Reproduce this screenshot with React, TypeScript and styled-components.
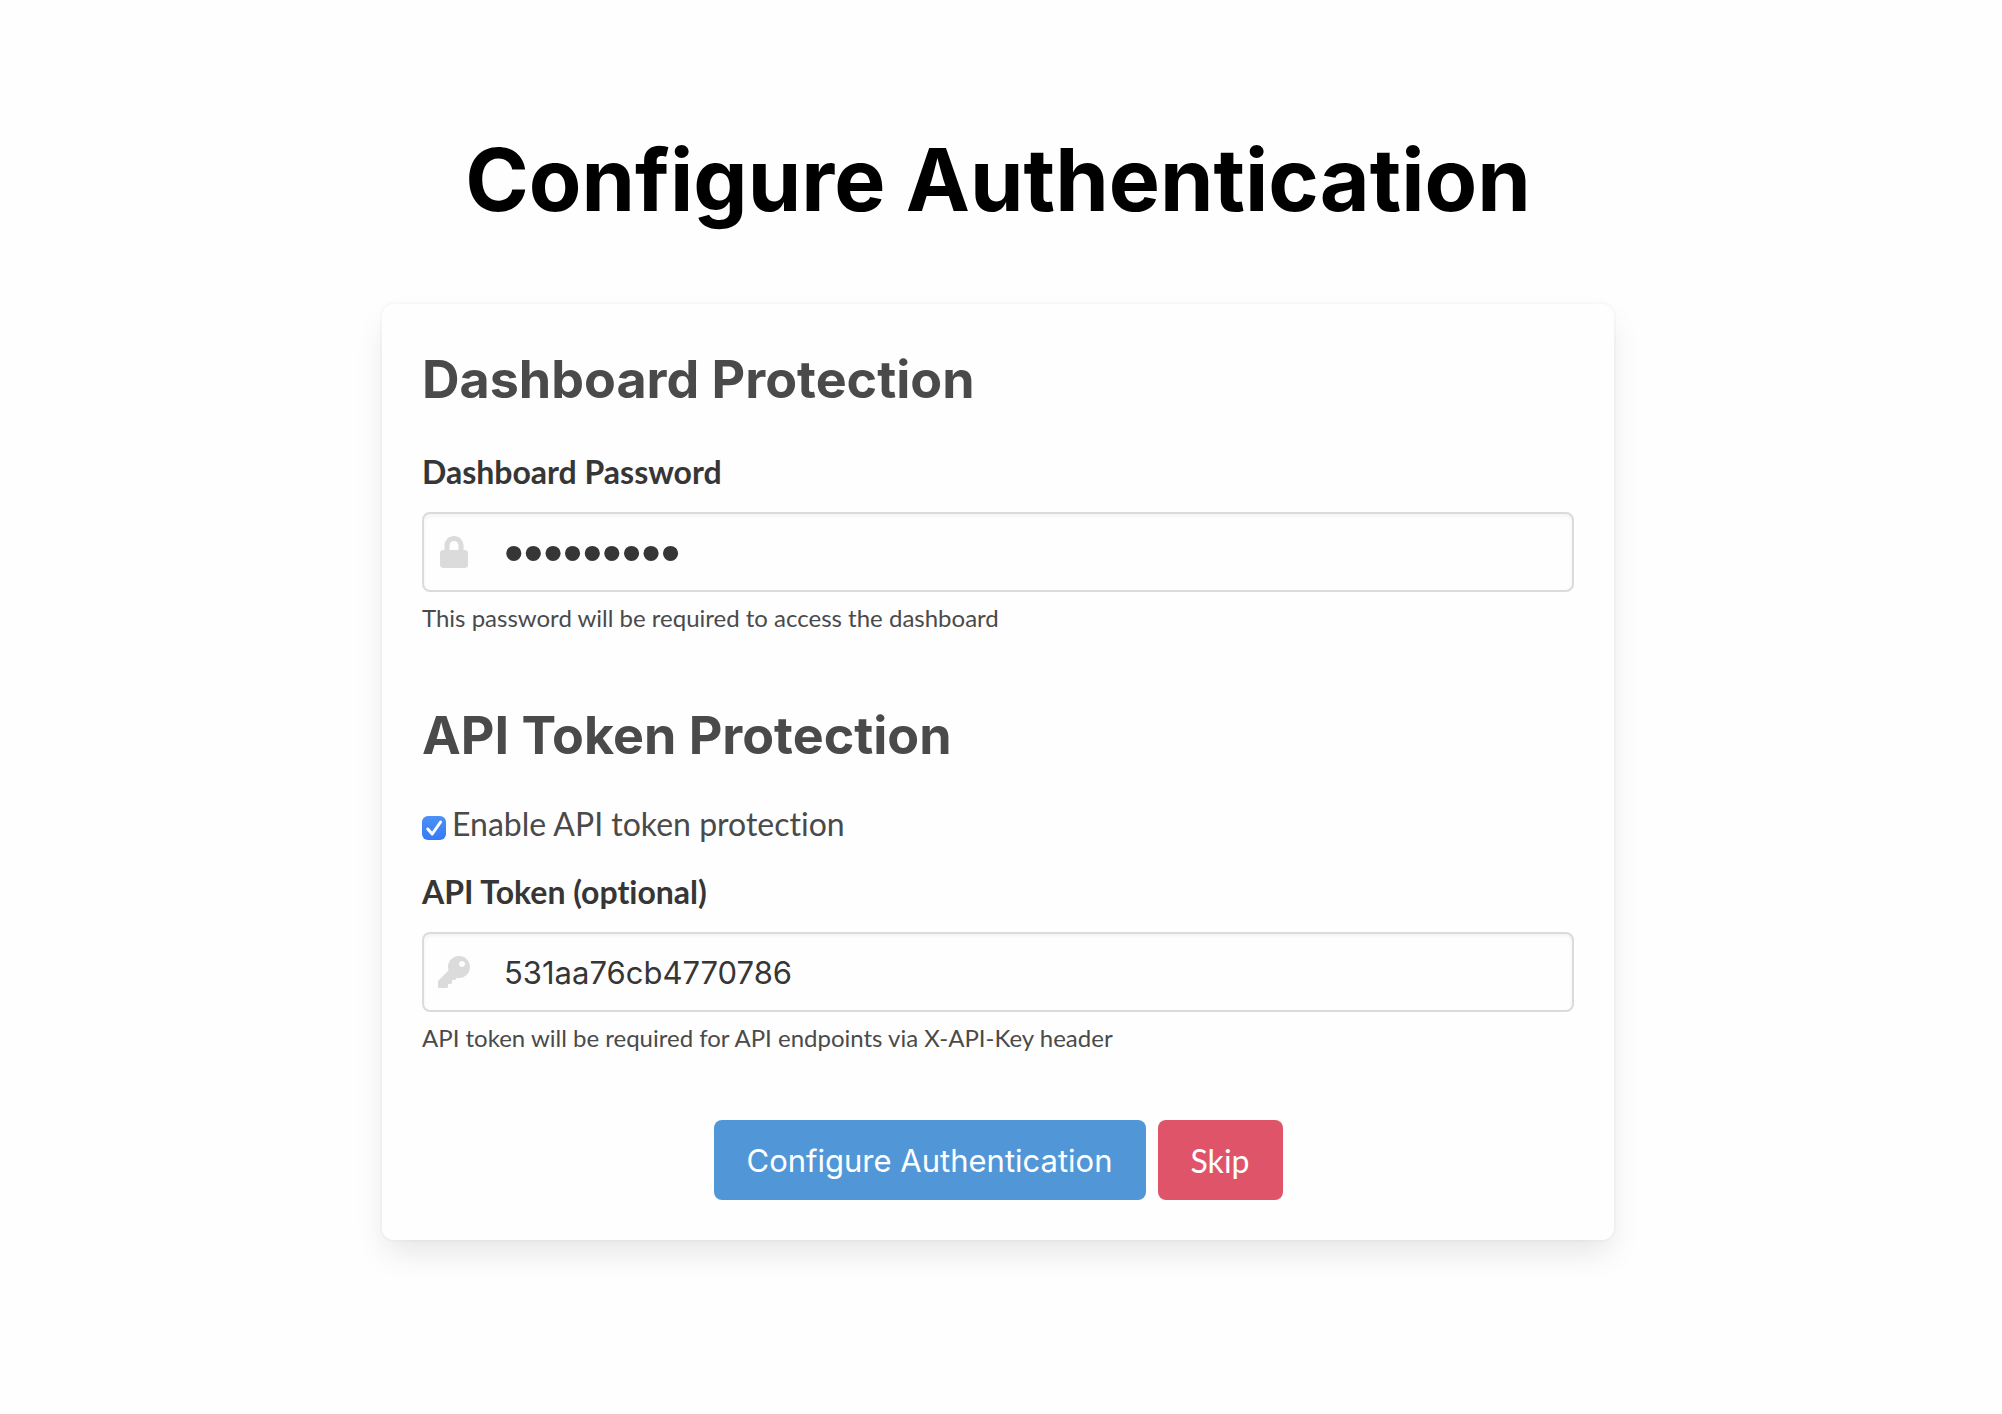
import React, { useState } from "react";
import styled, { createGlobalStyle } from "styled-components";
import { FaKey, FaLock } from "react-icons/fa";

const bodyFont = `Lato, "Open Sans", sans-serif`;
const headingFont = `Inter, "Open Sans", sans-serif`;
const controlFont = `Inter, "Liberation Sans", sans-serif`;

const GlobalStyle = createGlobalStyle`
  *, *::before, *::after { box-sizing: border-box; }
  body {
    margin: 0;
    background: #fefefe;
    color: #4a4a4a;
    font-family: ${bodyFont};
    font-size: 32px;
    font-variant-ligatures: none;
    line-height: 48px;
  }
`;

const Page = styled.main`
  display: flex;
  flex-direction: column;
  align-items: center;
  gap: 64px;
  padding: 120px 6px 120px 0;
`;

const Title = styled.h1`
  margin: 0;
  color: #000;
  font-family: ${headingFont};
  font-size: 86px;
  font-weight: 700;
  line-height: 120px;
  text-align: center;
`;

const Card = styled.form`
  display: flex;
  flex-direction: column;
  gap: 64px;
  width: 100%;
  max-width: 1232px;
  padding: 40px;
  border-radius: 12px;
  background: #fefefe;
  box-shadow: 0 16px 32px -4px rgba(10, 10, 10, 0.1), 0 0 0 2px rgba(10, 10, 10, 0.02);
`;

const Section = styled.section`
  display: flex;
  flex-direction: column;
`;

const SectionTitle = styled.h2`
  margin: 0 0 32px;
  font-family: ${headingFont};
  font-size: 52px;
  font-weight: 700;
  line-height: 72px;
`;

const Label = styled.label`
  margin-bottom: 16px;
  color: #363636;
  font-weight: 700;
`;

const Control = styled.div`
  display: grid;
  grid-template-columns: 64px 1fr;
  align-items: center;
`;

const ControlIcon = styled.span`
  display: flex;
  justify-content: center;
  grid-area: 1 / 1;
  z-index: 1;
  color: #dbdbdb;
  font-size: 32px;
  pointer-events: none;
`;

const Input = styled.input`
  grid-area: 1 / 1 / 2 / 3;
  width: 100%;
  height: 80px;
  padding: 0 24px 0 80px;
  border: 2px solid #dbdbdb;
  border-radius: 8px;
  outline: none;
  background: #fefefe;
  box-shadow: inset 0 2px 4px rgba(10, 10, 10, 0.05);
  color: #363636;
  font-family: ${controlFont};
  font-size: 31px;

  &[type="password"] {
    font-family: "Liberation Sans", sans-serif;
    font-size: 56px;
  }

  &:focus-visible {
    border-color: #5197d8;
  }
`;

const Help = styled.p`
  margin: 8px 0 0;
  font-size: 24px;
  line-height: 36px;
`;

const CheckLabel = styled.label`
  display: flex;
  align-items: center;
  align-self: flex-start;
  gap: 6px;
  margin-bottom: 24px;
  line-height: 40px;
  cursor: pointer;
`;

const CheckBox = styled.span`
  display: grid;
  padding-top: 8px;
`;

const CheckInput = styled.input`
  grid-area: 1 / 1;
  width: 24px;
  height: 24px;
  margin: 0;
  border: 1px solid #b5b5b5;
  border-radius: 6px;
  appearance: none;

  &:checked {
    border: 0;
    background: linear-gradient(#4b91f7, #367af6);
  }
`;

const CheckMark = styled.svg`
  grid-area: 1 / 1;
  width: 24px;
  height: 24px;
  pointer-events: none;
`;

const Buttons = styled.div`
  display: flex;
  flex-wrap: wrap;
  justify-content: center;
  gap: 12px;
`;

const Button = styled.button<{ $tone: "info" | "danger" }>`
  height: 80px;
  padding: 0 33px;
  border: 0;
  border-radius: 8px;
  background: ${({ $tone }) => ($tone === "info" ? "#5197d8" : "#e0546a")};
  color: #fff;
  font-family: ${({ $tone }) => ($tone === "info" ? controlFont : bodyFont)};
  font-size: ${({ $tone }) => ($tone === "info" ? "31px" : "32px")};
  cursor: pointer;
`;

export default function App() {
  const [password, setPassword] = useState("dashboard");
  const [token, setToken] = useState("531aa76cb4770786");
  const [enabled, setEnabled] = useState(true);

  return (
    <>
      <GlobalStyle />
      <Page>
        <Title>Configure Authentication</Title>
        <Card onSubmit={(event) => event.preventDefault()}>
          <Section>
            <SectionTitle>Dashboard Protection</SectionTitle>
            <Label htmlFor="password">Dashboard Password</Label>
            <Control>
              <ControlIcon>
                <FaLock />
              </ControlIcon>
              <Input
                id="password"
                type="password"
                value={password}
                onChange={(event) => setPassword(event.target.value)}
              />
            </Control>
            <Help>This password will be required to access the dashboard</Help>
          </Section>
          <Section>
            <SectionTitle>API Token Protection</SectionTitle>
            <CheckLabel>
              <CheckBox>
                <CheckInput
                  type="checkbox"
                  checked={enabled}
                  onChange={(event) => setEnabled(event.target.checked)}
                />
                {enabled && (
                  <CheckMark viewBox="0 0 24 24" fill="none" aria-hidden="true">
                    <path
                      d="M5.8 13 10.2 18 18.6 6"
                      stroke="#fff"
                      strokeWidth="3"
                      strokeLinecap="round"
                      strokeLinejoin="round"
                    />
                  </CheckMark>
                )}
              </CheckBox>
              Enable API token protection
            </CheckLabel>
            <Label htmlFor="token">API Token (optional)</Label>
            <Control>
              <ControlIcon>
                <FaKey />
              </ControlIcon>
              <Input
                id="token"
                type="text"
                value={token}
                onChange={(event) => setToken(event.target.value)}
              />
            </Control>
            <Help>API token will be required for API endpoints via X-API-Key header</Help>
          </Section>
          <Buttons>
            <Button type="submit" $tone="info">
              Configure Authentication
            </Button>
            <Button type="button" $tone="danger">
              Skip
            </Button>
          </Buttons>
        </Card>
      </Page>
    </>
  );
}
